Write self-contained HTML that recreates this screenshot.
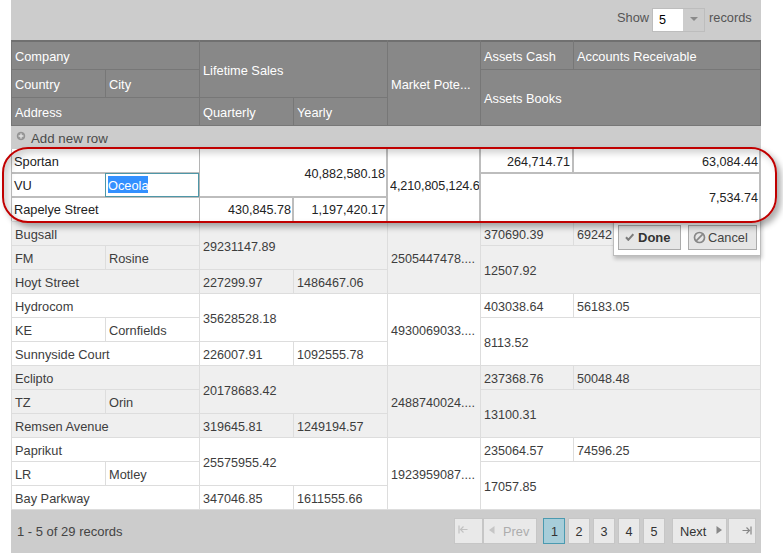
<!DOCTYPE html>
<html><head><meta charset="utf-8"><style>
*{box-sizing:border-box;margin:0;padding:0}
html,body{width:783px;height:555px;background:#fff;overflow:hidden}
body{font-family:"Liberation Sans",sans-serif;color:#3d3d3d;position:relative}
.a{position:absolute}
.t{position:absolute;white-space:nowrap}
</style></head><body>
<div class="a" style="left:11px;top:0px;width:750px;height:40px;background:#cccccc"></div>
<div class="t" style="left:617px;top:12.16px;font-size:12.8px;line-height:12.8px;color:#555">Show</div>
<div class="a" style="left:652px;top:8px;width:53px;height:24px;background:#cccccc;border:1px solid #bdbdbd"></div>
<div class="a" style="left:653px;top:9px;width:30px;height:22px;background:#fff"></div>
<div class="t" style="left:659px;top:14.33px;font-size:12.6px;line-height:12.6px;color:#000">5</div>
<div class="a" style="left:690px;top:17px;width:0;height:0;border-left:4px solid transparent;border-right:4px solid transparent;border-top:4px solid #8a8a8a"></div>
<div class="t" style="left:709px;top:12.16px;font-size:12.8px;line-height:12.8px;color:#555">records</div>
<div class="a" style="left:11px;top:40px;width:750px;height:86px;background:#888;border-top:2px solid #707070;border-left:1px solid #777;border-right:1px solid #777"></div>
<div class="a" style="left:11px;top:69px;width:188px;height:1px;background:#777"></div>
<div class="a" style="left:199px;top:97px;width:188px;height:1px;background:#777"></div>
<div class="a" style="left:11px;top:97px;width:188px;height:1px;background:#777"></div>
<div class="a" style="left:480px;top:69px;width:281px;height:1px;background:#777"></div>
<div class="a" style="left:105px;top:69px;width:1px;height:28px;background:#777"></div>
<div class="a" style="left:199px;top:40px;width:1px;height:86px;background:#777"></div>
<div class="a" style="left:293px;top:97px;width:1px;height:29px;background:#777"></div>
<div class="a" style="left:387px;top:40px;width:1px;height:86px;background:#777"></div>
<div class="a" style="left:480px;top:40px;width:1px;height:86px;background:#777"></div>
<div class="a" style="left:573px;top:40px;width:1px;height:29px;background:#777"></div>
<div class="a" style="left:11px;top:125px;width:750px;height:1px;background:#777"></div>
<div class="t" style="left:15px;top:51.16px;font-size:12.8px;line-height:12.8px;color:#fff">Company</div>
<div class="t" style="left:15px;top:79.16px;font-size:12.8px;line-height:12.8px;color:#fff">Country</div>
<div class="t" style="left:109px;top:79.16px;font-size:12.8px;line-height:12.8px;color:#fff">City</div>
<div class="t" style="left:15px;top:107.16px;font-size:12.8px;line-height:12.8px;color:#fff">Address</div>
<div class="t" style="left:203px;top:65.16px;font-size:12.8px;line-height:12.8px;color:#fff">Lifetime Sales</div>
<div class="t" style="left:203px;top:107.16px;font-size:12.8px;line-height:12.8px;color:#fff">Quarterly</div>
<div class="t" style="left:297px;top:107.16px;font-size:12.8px;line-height:12.8px;color:#fff">Yearly</div>
<div class="t" style="left:391px;top:79.16px;font-size:12.8px;line-height:12.8px;color:#fff">Market Pote...</div>
<div class="t" style="left:484px;top:51.16px;font-size:12.8px;line-height:12.8px;color:#fff">Assets Cash</div>
<div class="t" style="left:577px;top:51.16px;font-size:12.8px;line-height:12.8px;color:#fff">Accounts Receivable</div>
<div class="t" style="left:484px;top:93.16px;font-size:12.8px;line-height:12.8px;color:#fff">Assets Books</div>
<div class="a" style="left:11px;top:126px;width:750px;height:23px;background:#cccccc"></div>
<svg class="a" style="left:16px;top:131px" width="10" height="10" viewBox="0 0 10 10"><circle cx="5" cy="5" r="3.8" fill="#9a9a9a" stroke="#8a8a8a" stroke-width="0.8"/><path d="M5 2.6 V7.4 M2.6 5 H7.4" stroke="#e2e2e2" stroke-width="1.3"/></svg>
<div class="t" style="left:31px;top:131.74px;font-size:13.3px;line-height:13.3px;color:#4a4a4a">Add new row</div>
<div class="a" style="left:11px;top:221px;width:750px;height:72px;background:#efefef"></div>
<div class="a" style="left:11px;top:221px;width:750px;height:1px;background:#dddddd"></div>
<div class="a" style="left:11px;top:245px;width:188px;height:1px;background:#dddddd"></div>
<div class="a" style="left:11px;top:269px;width:376px;height:1px;background:#dddddd"></div>
<div class="a" style="left:480px;top:245px;width:281px;height:1px;background:#dddddd"></div>
<div class="a" style="left:11px;top:221px;width:1px;height:72px;background:#dddddd"></div>
<div class="a" style="left:105px;top:245px;width:1px;height:24px;background:#dddddd"></div>
<div class="a" style="left:199px;top:221px;width:1px;height:72px;background:#dddddd"></div>
<div class="a" style="left:293px;top:269px;width:1px;height:24px;background:#dddddd"></div>
<div class="a" style="left:387px;top:221px;width:1px;height:72px;background:#dddddd"></div>
<div class="a" style="left:480px;top:221px;width:1px;height:72px;background:#dddddd"></div>
<div class="a" style="left:573px;top:221px;width:1px;height:24px;background:#dddddd"></div>
<div class="a" style="left:760px;top:221px;width:1px;height:72px;background:#dddddd"></div>
<div class="t" style="left:15px;top:229.16px;font-size:12.8px;line-height:12.8px;">Bugsall</div>
<div class="t" style="left:15px;top:253.16px;font-size:12.8px;line-height:12.8px;">FM</div>
<div class="t" style="left:109px;top:253.16px;font-size:12.8px;line-height:12.8px;">Rosine</div>
<div class="t" style="left:15px;top:277.16px;font-size:12.8px;line-height:12.8px;">Hoyt Street</div>
<div class="t" style="left:203px;top:241.33px;font-size:12.6px;line-height:12.6px;">29231147.89</div>
<div class="t" style="left:203px;top:277.33px;font-size:12.6px;line-height:12.6px;">227299.97</div>
<div class="t" style="left:297px;top:277.33px;font-size:12.6px;line-height:12.6px;">1486467.06</div>
<div class="t" style="left:391px;top:253.33px;font-size:12.6px;line-height:12.6px;">2505447478....</div>
<div class="t" style="left:484px;top:229.33px;font-size:12.6px;line-height:12.6px;">370690.39</div>
<div class="t" style="left:577px;top:229.33px;font-size:12.6px;line-height:12.6px;">69242</div>
<div class="t" style="left:484px;top:265.33px;font-size:12.6px;line-height:12.6px;">12507.92</div>
<div class="a" style="left:11px;top:293px;width:750px;height:72px;background:#ffffff"></div>
<div class="a" style="left:11px;top:293px;width:750px;height:1px;background:#dddddd"></div>
<div class="a" style="left:11px;top:317px;width:188px;height:1px;background:#dddddd"></div>
<div class="a" style="left:11px;top:341px;width:376px;height:1px;background:#dddddd"></div>
<div class="a" style="left:480px;top:317px;width:281px;height:1px;background:#dddddd"></div>
<div class="a" style="left:11px;top:293px;width:1px;height:72px;background:#dddddd"></div>
<div class="a" style="left:105px;top:317px;width:1px;height:24px;background:#dddddd"></div>
<div class="a" style="left:199px;top:293px;width:1px;height:72px;background:#dddddd"></div>
<div class="a" style="left:293px;top:341px;width:1px;height:24px;background:#dddddd"></div>
<div class="a" style="left:387px;top:293px;width:1px;height:72px;background:#dddddd"></div>
<div class="a" style="left:480px;top:293px;width:1px;height:72px;background:#dddddd"></div>
<div class="a" style="left:573px;top:293px;width:1px;height:24px;background:#dddddd"></div>
<div class="a" style="left:760px;top:293px;width:1px;height:72px;background:#dddddd"></div>
<div class="t" style="left:15px;top:301.16px;font-size:12.8px;line-height:12.8px;">Hydrocom</div>
<div class="t" style="left:15px;top:325.16px;font-size:12.8px;line-height:12.8px;">KE</div>
<div class="t" style="left:109px;top:325.16px;font-size:12.8px;line-height:12.8px;">Cornfields</div>
<div class="t" style="left:15px;top:349.16px;font-size:12.8px;line-height:12.8px;">Sunnyside Court</div>
<div class="t" style="left:203px;top:313.33px;font-size:12.6px;line-height:12.6px;">35628528.18</div>
<div class="t" style="left:203px;top:349.33px;font-size:12.6px;line-height:12.6px;">226007.91</div>
<div class="t" style="left:297px;top:349.33px;font-size:12.6px;line-height:12.6px;">1092555.78</div>
<div class="t" style="left:391px;top:325.33px;font-size:12.6px;line-height:12.6px;">4930069033....</div>
<div class="t" style="left:484px;top:301.33px;font-size:12.6px;line-height:12.6px;">403038.64</div>
<div class="t" style="left:577px;top:301.33px;font-size:12.6px;line-height:12.6px;">56183.05</div>
<div class="t" style="left:484px;top:337.33px;font-size:12.6px;line-height:12.6px;">8113.52</div>
<div class="a" style="left:11px;top:365px;width:750px;height:72px;background:#efefef"></div>
<div class="a" style="left:11px;top:365px;width:750px;height:1px;background:#dddddd"></div>
<div class="a" style="left:11px;top:389px;width:188px;height:1px;background:#dddddd"></div>
<div class="a" style="left:11px;top:413px;width:376px;height:1px;background:#dddddd"></div>
<div class="a" style="left:480px;top:389px;width:281px;height:1px;background:#dddddd"></div>
<div class="a" style="left:11px;top:365px;width:1px;height:72px;background:#dddddd"></div>
<div class="a" style="left:105px;top:389px;width:1px;height:24px;background:#dddddd"></div>
<div class="a" style="left:199px;top:365px;width:1px;height:72px;background:#dddddd"></div>
<div class="a" style="left:293px;top:413px;width:1px;height:24px;background:#dddddd"></div>
<div class="a" style="left:387px;top:365px;width:1px;height:72px;background:#dddddd"></div>
<div class="a" style="left:480px;top:365px;width:1px;height:72px;background:#dddddd"></div>
<div class="a" style="left:573px;top:365px;width:1px;height:24px;background:#dddddd"></div>
<div class="a" style="left:760px;top:365px;width:1px;height:72px;background:#dddddd"></div>
<div class="t" style="left:15px;top:373.16px;font-size:12.8px;line-height:12.8px;">Eclipto</div>
<div class="t" style="left:15px;top:397.16px;font-size:12.8px;line-height:12.8px;">TZ</div>
<div class="t" style="left:109px;top:397.16px;font-size:12.8px;line-height:12.8px;">Orin</div>
<div class="t" style="left:15px;top:421.16px;font-size:12.8px;line-height:12.8px;">Remsen Avenue</div>
<div class="t" style="left:203px;top:385.33px;font-size:12.6px;line-height:12.6px;">20178683.42</div>
<div class="t" style="left:203px;top:421.33px;font-size:12.6px;line-height:12.6px;">319645.81</div>
<div class="t" style="left:297px;top:421.33px;font-size:12.6px;line-height:12.6px;">1249194.57</div>
<div class="t" style="left:391px;top:397.33px;font-size:12.6px;line-height:12.6px;">2488740024....</div>
<div class="t" style="left:484px;top:373.33px;font-size:12.6px;line-height:12.6px;">237368.76</div>
<div class="t" style="left:577px;top:373.33px;font-size:12.6px;line-height:12.6px;">50048.48</div>
<div class="t" style="left:484px;top:409.33px;font-size:12.6px;line-height:12.6px;">13100.31</div>
<div class="a" style="left:11px;top:437px;width:750px;height:72px;background:#ffffff"></div>
<div class="a" style="left:11px;top:437px;width:750px;height:1px;background:#dddddd"></div>
<div class="a" style="left:11px;top:461px;width:188px;height:1px;background:#dddddd"></div>
<div class="a" style="left:11px;top:485px;width:376px;height:1px;background:#dddddd"></div>
<div class="a" style="left:480px;top:461px;width:281px;height:1px;background:#dddddd"></div>
<div class="a" style="left:11px;top:437px;width:1px;height:72px;background:#dddddd"></div>
<div class="a" style="left:105px;top:461px;width:1px;height:24px;background:#dddddd"></div>
<div class="a" style="left:199px;top:437px;width:1px;height:72px;background:#dddddd"></div>
<div class="a" style="left:293px;top:485px;width:1px;height:24px;background:#dddddd"></div>
<div class="a" style="left:387px;top:437px;width:1px;height:72px;background:#dddddd"></div>
<div class="a" style="left:480px;top:437px;width:1px;height:72px;background:#dddddd"></div>
<div class="a" style="left:573px;top:437px;width:1px;height:24px;background:#dddddd"></div>
<div class="a" style="left:760px;top:437px;width:1px;height:72px;background:#dddddd"></div>
<div class="t" style="left:15px;top:445.16px;font-size:12.8px;line-height:12.8px;">Paprikut</div>
<div class="t" style="left:15px;top:469.16px;font-size:12.8px;line-height:12.8px;">LR</div>
<div class="t" style="left:109px;top:469.16px;font-size:12.8px;line-height:12.8px;">Motley</div>
<div class="t" style="left:15px;top:493.16px;font-size:12.8px;line-height:12.8px;">Bay Parkway</div>
<div class="t" style="left:203px;top:457.33px;font-size:12.6px;line-height:12.6px;">25575955.42</div>
<div class="t" style="left:203px;top:493.33px;font-size:12.6px;line-height:12.6px;">347046.85</div>
<div class="t" style="left:297px;top:493.33px;font-size:12.6px;line-height:12.6px;">1611555.66</div>
<div class="t" style="left:391px;top:469.33px;font-size:12.6px;line-height:12.6px;">1923959087....</div>
<div class="t" style="left:484px;top:445.33px;font-size:12.6px;line-height:12.6px;">235064.57</div>
<div class="t" style="left:577px;top:445.33px;font-size:12.6px;line-height:12.6px;">74596.25</div>
<div class="t" style="left:484px;top:481.33px;font-size:12.6px;line-height:12.6px;">17057.85</div>
<div class="a" style="left:613px;top:215px;width:148px;height:41px;background:#fff;border:1px solid #bcbcbc;box-shadow:1px 3px 4px rgba(0,0,0,.22)"></div>
<div class="a" style="left:618px;top:225px;width:63px;height:25px;background:#e6e6e6;border:1px solid #ababab"></div>
<svg class="a" style="left:625px;top:233px" width="9" height="8" viewBox="0 0 9 8"><path d="M1 4.3 L3.3 6.8 L8.3 1.2" fill="none" stroke="#7c7c7c" stroke-width="2"/></svg>
<div class="t" style="left:638px;top:231.00px;font-size:13px;line-height:13px;color:#333;font-weight:bold">Done</div>
<div class="a" style="left:688px;top:225px;width:69px;height:25px;background:#e6e6e6;border:1px solid #ababab"></div>
<svg class="a" style="left:693px;top:231px" width="13" height="13" viewBox="0 0 13 13"><circle cx="6.5" cy="6.5" r="5" fill="none" stroke="#888" stroke-width="1.7"/><path d="M3.2 9.8 L9.8 3.2" stroke="#888" stroke-width="1.7"/></svg>
<div class="t" style="left:708px;top:231.76px;font-size:12.8px;line-height:12.8px;color:#444">Cancel</div>
<div class="a" style="left:11px;top:149px;width:750px;height:72px;background:#fff"></div>
<div class="a" style="left:11px;top:149px;width:1px;height:72px;background:#bdbdbd"></div>
<div class="a" style="left:759px;top:149px;width:2px;height:72px;background:#bdbdbd"></div>
<div class="a" style="left:11px;top:172px;width:188px;height:2px;background:#bdbdbd"></div>
<div class="a" style="left:11px;top:196px;width:376px;height:2px;background:#bdbdbd"></div>
<div class="a" style="left:480px;top:172px;width:281px;height:2px;background:#bdbdbd"></div>
<div class="a" style="left:199px;top:149px;width:1px;height:72px;background:#b4b4b4"></div>
<div class="a" style="left:292px;top:196px;width:2px;height:25px;background:#bdbdbd"></div>
<div class="a" style="left:386px;top:149px;width:2px;height:72px;background:#bdbdbd"></div>
<div class="a" style="left:479px;top:149px;width:2px;height:72px;background:#bdbdbd"></div>
<div class="a" style="left:572px;top:149px;width:2px;height:24px;background:#bdbdbd"></div>
<div class="a" style="left:105px;top:173px;width:1px;height:24px;background:#bdbdbd"></div>
<div class="a" style="left:105px;top:173px;width:94px;height:24px;background:#fff;border:1px solid #4e97a8"></div>
<div class="a" style="left:108px;top:176px;width:40px;height:17px;background:#3390ff"></div>
<div class="t" style="left:108px;top:180.16px;font-size:12.8px;line-height:12.8px;color:#fff">Oceola</div>
<div class="t" style="left:14px;top:156.16px;font-size:12.8px;line-height:12.8px;color:#222">Sportan</div>
<div class="t" style="left:14px;top:180.16px;font-size:12.8px;line-height:12.8px;color:#222">VU</div>
<div class="t" style="left:14px;top:204.16px;font-size:12.8px;line-height:12.8px;color:#222">Rapelye Street</div>
<div class="t" style="left:85px;width:300px;text-align:right;top:168.33px;font-size:12.6px;line-height:12.6px;color:#222">40,882,580.18</div>
<div class="t" style="left:-9px;width:300px;text-align:right;top:204.33px;font-size:12.6px;line-height:12.6px;color:#222">430,845.78</div>
<div class="t" style="left:85px;width:300px;text-align:right;top:204.33px;font-size:12.6px;line-height:12.6px;color:#222">1,197,420.17</div>
<div class="t" style="left:390px;width:89px;overflow:hidden;letter-spacing:-0.1px;top:180.33px;font-size:12.6px;line-height:12.6px;color:#222">4,210,805,124.6</div>
<div class="t" style="left:270px;width:300px;text-align:right;top:156.33px;font-size:12.6px;line-height:12.6px;color:#222">264,714.71</div>
<div class="t" style="left:458px;width:300px;text-align:right;top:156.33px;font-size:12.6px;line-height:12.6px;color:#222">63,084.44</div>
<div class="t" style="left:458px;width:300px;text-align:right;top:192.33px;font-size:12.6px;line-height:12.6px;color:#222">7,534.74</div>
<div class="a" style="left:2px;top:147px;width:775px;height:76px;border:2px solid #c00000;border-radius:26px;box-shadow:4px 4px 6px rgba(0,0,0,.33), inset 4px 4px 7px rgba(0,0,0,.18);filter:blur(0.35px)"></div>
<div class="a" style="left:11px;top:509px;width:750px;height:1px;background:#dddddd"></div>
<div class="a" style="left:11px;top:510px;width:750px;height:43px;background:#cccccc"></div>
<div class="t" style="left:17px;top:525.00px;font-size:13px;line-height:13px;color:#444">1 - 5 of 29 records</div>
<div class="a" style="left:454px;top:518px;width:29px;height:26px;background:#e9e9e9;border:1px solid #c6c6c6"></div>
<svg class="a" style="left:458px;top:525px" width="10" height="9" viewBox="0 0 10 9"><path d="M1 0.5 V8.5 M9.5 4.5 H2.5 M5.5 1.5 L2.5 4.5 L5.5 7.5" fill="none" stroke="#c2c2c2" stroke-width="1.2"/></svg>
<div class="a" style="left:483px;top:518px;width:54px;height:26px;background:#e9e9e9;border:1px solid #c6c6c6"></div>
<svg class="a" style="left:489px;top:526px" width="6" height="8" viewBox="0 0 6 8"><path d="M5.5 0 V8 L0 4 Z" fill="#c6c6c6"/></svg>
<div class="t" style="left:503px;top:526.16px;font-size:12.8px;line-height:12.8px;color:#adadad">Prev</div>
<div class="a" style="left:543px;top:518px;width:22px;height:26px;background:#a7cdd9;border:1px solid #4b9ab0"></div>
<div class="t" style="left:551px;top:526.33px;font-size:12.6px;line-height:12.6px;color:#333">1</div>
<div class="a" style="left:568px;top:518px;width:22px;height:26px;background:#e9e9e9;border:1px solid #c6c6c6"></div>
<div class="t" style="left:575.5px;top:526.33px;font-size:12.6px;line-height:12.6px;color:#333">2</div>
<div class="a" style="left:593px;top:518px;width:22px;height:26px;background:#e9e9e9;border:1px solid #c6c6c6"></div>
<div class="t" style="left:600.5px;top:526.33px;font-size:12.6px;line-height:12.6px;color:#333">3</div>
<div class="a" style="left:618px;top:518px;width:22px;height:26px;background:#e9e9e9;border:1px solid #c6c6c6"></div>
<div class="t" style="left:625.5px;top:526.33px;font-size:12.6px;line-height:12.6px;color:#333">4</div>
<div class="a" style="left:643px;top:518px;width:22px;height:26px;background:#e9e9e9;border:1px solid #c6c6c6"></div>
<div class="t" style="left:650.5px;top:526.33px;font-size:12.6px;line-height:12.6px;color:#333">5</div>
<div class="a" style="left:672px;top:518px;width:55px;height:26px;background:#e9e9e9;border:1px solid #c6c6c6"></div>
<div class="t" style="left:680px;top:526.16px;font-size:12.8px;line-height:12.8px;color:#333">Next</div>
<svg class="a" style="left:716px;top:526px" width="6" height="8" viewBox="0 0 6 8"><path d="M0.5 0 V8 L6 4 Z" fill="#888"/></svg>
<div class="a" style="left:728px;top:518px;width:28px;height:26px;background:#e9e9e9;border:1px solid #c6c6c6"></div>
<svg class="a" style="left:742px;top:526px" width="10" height="9" viewBox="0 0 10 9"><path d="M9 0.5 V8.5 M0.5 4.5 H7.5 M4.5 1.5 L7.5 4.5 L4.5 7.5" fill="none" stroke="#888" stroke-width="1.2"/></svg>
</body></html>
